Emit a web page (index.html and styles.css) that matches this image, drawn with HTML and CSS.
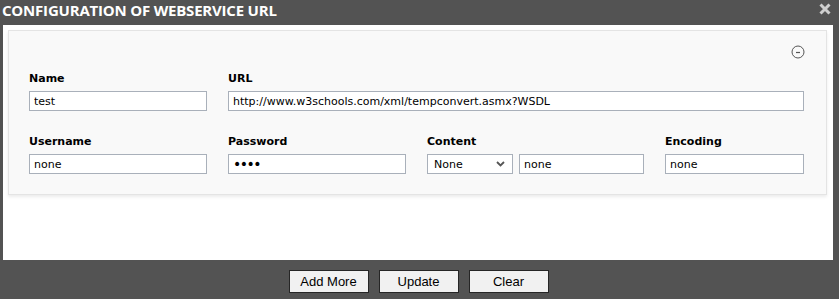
FILE: index.html
```html
<!DOCTYPE html>
<html lang="en">
<head>
  <meta charset="UTF-8">
  <title>Configuration of Webservice URL</title>
  <link rel="stylesheet" href="styles.css">
</head>
<body>
  <div class="dialog">
    <div class="titlebar">
      <span class="title">CONFIGURATION OF WEBSERVICE URL</span>
      <svg class="close" width="12" height="12" viewBox="0 0 12 12">
        <path d="M1.5 1.5 L10.5 10.5 M10.5 1.5 L1.5 10.5" stroke="#cfcfcf" stroke-width="3"/>
      </svg>
    </div>

    <div class="content">
      <div class="panel">
        <div class="panel-tools">
          <svg width="14" height="14" viewBox="0 0 14 14">
            <circle cx="7" cy="7" r="6" fill="none" stroke="#555" stroke-width="1"/>
            <path d="M5 7.5 H9" stroke="#555" stroke-width="1.2"/>
          </svg>
        </div>

        <div class="form-grid">
          <div class="field">
            <label>Name</label>
            <input type="text" value="test">
          </div>
          <div class="field span-3">
            <label>URL</label>
            <input type="text" value="http://www.w3schools.com/xml/tempconvert.asmx?WSDL">
          </div>

          <div class="field">
            <label>Username</label>
            <input type="text" value="none">
          </div>
          <div class="field">
            <label>Password</label>
            <input class="secret" type="password" value="none">
          </div>
          <div class="field">
            <label>Content</label>
            <div class="pair">
              <div class="select">
                <span>None</span>
                <svg width="9" height="6" viewBox="0 0 9 6">
                  <path d="M1 1 L4.5 4.5 L8 1" fill="none" stroke="#555" stroke-width="1.8"/>
                </svg>
              </div>
              <input type="text" value="none">
            </div>
          </div>
          <div class="field">
            <label>Encoding</label>
            <input type="text" value="none">
          </div>
        </div>
      </div>
    </div>

    <div class="actions">
      <button>Add More</button>
      <button>Update</button>
      <button>Clear</button>
    </div>
  </div>
</body>
</html>
```

FILE: styles.css
```css
body {
  margin: 0;
  background: #535353;
  font-family: "DejaVu Sans", Verdana, sans-serif;
  color: #000;
}
.dialog {
  width: 839px;
  height: 299px;
  display: flex;
  flex-direction: column;
}
.titlebar {
  height: 25px;
  display: flex;
  align-items: center;
  justify-content: space-between;
  padding: 0 8px 0 2px;
}
.title {
  color: #fff;
  font-family: "Open Sans", sans-serif;
  font-weight: 700;
  font-size: 15px;
  letter-spacing: -0.2px;
  margin-top: -6px;
}
.close {
  margin-top: -8px;
}
.content {
  margin: 0 6px 0 3px;
  height: 235px;
  background: #fff;
  padding: 5px 6px 0 5px;
  box-sizing: border-box;
}
.panel {
  height: 165px;
  box-sizing: border-box;
  background: #f9f9f9;
  border: 1px solid #e4e4e4;
  box-shadow: 0 2px 3px rgba(0,0,0,0.08);
  padding: 14px 21px 0 20px;
}
.panel-tools {
  display: flex;
  justify-content: flex-end;
  height: 20px;
}
.form-grid {
  display: grid;
  grid-template-columns: 178px 178px 217px 139px;
  column-gap: 21px;
  row-gap: 23px;
  margin-top: 6px;
}
.span-3 {
  grid-column: span 3;
}
.field {
  display: flex;
  flex-direction: column;
}
.field label {
  font-size: 11px;
  font-weight: 700;
  height: 20px;
  line-height: 15px;
}
.field input {
  height: 20px;
  box-sizing: border-box;
  border: 1px solid #a9b0ba;
  background: #fff;
  padding: 0 4px;
  font-family: "DejaVu Sans", Verdana, sans-serif;
  font-size: 11px;
  color: #000;
  margin: 0;
  width: 100%;
}
.field input.secret {
  font-size: 14px;
  letter-spacing: -1.5px;
}
.pair {
  display: flex;
  gap: 6px;
}
.pair input {
  width: 125px;
}
.select {
  width: 86px;
  height: 20px;
  box-sizing: border-box;
  border: 1px solid #a9b0ba;
  background: #fff;
  display: flex;
  align-items: center;
  justify-content: space-between;
  padding: 0 7px 0 6px;
  font-size: 11px;
  flex-shrink: 0;
}
.actions {
  flex: 1;
  display: flex;
  justify-content: center;
  gap: 10px;
  padding-top: 10px;
  padding-right: 2px;
}
.actions button {
  width: 80px;
  height: 23px;
  border: 1px solid #262626;
  background: #f1f1f1;
  font-family: "Liberation Sans", Arial, sans-serif;
  font-size: 13px;
  color: #000;
  padding: 0;
}
```
